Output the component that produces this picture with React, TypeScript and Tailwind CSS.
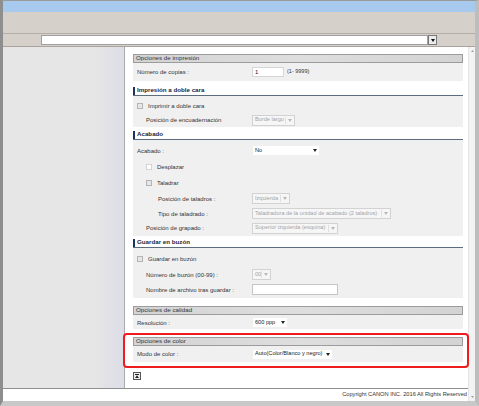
import clsx from "clsx";
import type { ReactNode } from "react";

const indents = ["pl-[4px]", "pl-[13px]", "pl-[25px]"];

function Arrow({ color }: { color: string }) {
  return (
    <svg width="4" height="3" viewBox="0 0 4 3">
      <path d="M0 0 L4 0 L2 3Z" fill={color} />
    </svg>
  );
}

function Select({
  value,
  className,
  disabled,
}: {
  value: string;
  className: string;
  disabled?: boolean;
}) {
  return (
    <div
      className={clsx(
        "flex h-[11px] items-center justify-between border pl-[2px] pr-[2px] text-[5.6px]",
        disabled
          ? "border-[#d2d2d2] bg-[#f6f6f6] text-[#a4a4a4]"
          : "border-[#f0f0f0] bg-white text-[#222]",
        className,
      )}
    >
      <span className="whitespace-nowrap leading-none">{value}</span>
      <span className="flex shrink-0 items-center gap-[2px]">
        {disabled && <span className="h-[7px] w-px bg-[#e0e0e0]" />}
        <Arrow color={disabled ? "#b8b8b8" : "#222"} />
      </span>
    </div>
  );
}

function Check({ light }: { light?: boolean }) {
  return (
    <span
      className={clsx(
        "inline-block h-[6px] w-[6px] border",
        light ? "border-[#d4d4d4] bg-white" : "border-[#b4b4b4] bg-[#e6e6e6]",
      )}
    />
  );
}

function Row({
  h,
  indent = 0,
  label,
  children,
}: {
  h: string;
  indent?: number;
  label: ReactNode;
  children?: ReactNode;
}) {
  return (
    <div className={clsx("grid grid-cols-[119px_1fr] items-center", h)}>
      <div className={clsx("flex items-center whitespace-nowrap text-[#333]", indents[indent])}>
        {label}
      </div>
      <div className="flex items-center">{children}</div>
    </div>
  );
}

function BoxHeader({ title, className }: { title: string; className?: string }) {
  return (
    <div
      className={clsx(
        "flex h-[9px] items-center border border-[#9c9c9c] bg-linear-to-r from-[#d3d3d3] via-[#dedede] to-[#d3d3d3] pl-[2px] text-[6.2px] text-[#333]",
        className,
      )}
    >
      {title}
    </div>
  );
}

function LineHeader({ title, className }: { title: string; className?: string }) {
  return (
    <div
      className={clsx(
        "flex h-[10px] items-center border-b border-[#5d6b7e] text-[6.2px] font-bold text-[#1d2636]",
        className,
      )}
    >
      <span className="mr-[2px] h-[8px] w-[2px] bg-[#1c3362]" />
      {title}
    </div>
  );
}

function CheckLabel({ text, light }: { text: string; light?: boolean }) {
  return (
    <span className="flex items-center gap-[5px] whitespace-nowrap">
      <Check light={light} />
      {text}
    </span>
  );
}

function TopIcon() {
  return (
    <svg width="8" height="8" viewBox="0 0 8 8">
      <rect x="0.5" y="0.5" width="7" height="7" fill="#eeeeee" stroke="#555" />
      <rect x="2" y="2" width="4" height="1" fill="#222" />
      <path d="M2 6 L4 3.3 L6 6Z" fill="#222" />
    </svg>
  );
}

export default function App() {
  return (
    <div className="h-[406px] w-[479px] overflow-hidden bg-[#c4c4c4] font-['Liberation_Sans',Arial,sans-serif] text-[6px] leading-none">
      <div className="flex h-full flex-col border-l-[3px] border-r-[4px] border-t border-b-[5px] border-l-[#8e8e8e] border-r-[#bdbdbd] border-t-[#9a9a9a] border-b-[#c8c8c8]">
        {/* title band */}
        <div className="h-[11px] bg-[#a7c9ee]" />
        {/* toolbar */}
        <div className="h-[22px] border-b border-[#b3afa7] bg-[#d5d1ca]" />
        {/* address row */}
        <div className="flex h-[13px] items-center border-b border-[#a9a59e] bg-[#d5d1ca] pl-[38px]">
          <div className="h-[10px] w-[387px] border border-[#a0a0a0] bg-white" />
          <div className="flex h-[10px] w-[9px] items-center justify-center border border-[#7a7a7a] bg-[#ececec]">
            <Arrow color="#111" />
          </div>
        </div>

        {/* content */}
        <div className="flex min-h-0 flex-1">
          <div className="flex flex-1 flex-col">
            <div className="flex min-h-0 flex-1">
              <div className="w-[122px] border-r border-[#ababab] bg-linear-to-r from-[#e6e6e6] from-75% to-[#dcdde7]" />
              <div className="relative flex-1 bg-white pl-[8px] pr-[5px] pt-[7px]">
                <BoxHeader title="Opciones de impresión" />
                <div className="h-[18px] bg-[#f0f0f0]">
                  <Row h="h-[18px]" label="Número de copias :">
                    <div className="flex h-[10px] w-[32px] items-center border border-[#d6d6d6] bg-white pl-[2px] text-[#222]">
                      1
                    </div>
                    <span className="ml-[3px] text-[5.5px] text-[#333]">(1- 9999)</span>
                  </Row>
                </div>

                <LineHeader title="Impresión a doble cara" className="mt-[5px]" />
                <div className="bg-[#f0f0f0] pt-[3px]">
                  <Row h="h-[14px]" label={<CheckLabel text="Imprimir a doble cara" />} />
                  <Row h="h-[14px]" indent={1} label="Posición de encuadernación">
                    <Select value="Borde largo" className="w-[43px]" disabled />
                  </Row>
                </div>

                <LineHeader title="Acabado" className="mt-[3px]" />
                <div className="bg-[#f0f0f0] pb-[1px] pt-[3px]">
                  <Row h="h-[15px]" label="Acabado :">
                    <Select value="No" className="w-[68px]" />
                  </Row>
                  <Row h="h-[17px]" indent={1} label={<CheckLabel text="Desplazar" light />} />
                  <Row h="h-[16px]" indent={1} label={<CheckLabel text="Taladrar" />} />
                  <Row h="h-[15px]" indent={2} label="Posición de taladros :">
                    <Select value="Izquierda" className="w-[38px]" disabled />
                  </Row>
                  <Row h="h-[15px]" indent={2} label="Tipo de taladrado :">
                    <Select
                      value="Taladradora de la unidad de acabado (2 taladros)"
                      className="w-[139px]"
                      disabled
                    />
                  </Row>
                  <Row h="h-[14px]" indent={1} label="Posición de grapado :">
                    <Select value="Superior izquierda (esquina)" className="w-[86px]" disabled />
                  </Row>
                </div>

                <LineHeader title="Guardar en buzón" className="mt-[2px]" />
                <div className="bg-[#f0f0f0] pb-[1px] pt-[3px]">
                  <Row h="h-[16px]" label={<CheckLabel text="Guardar en buzón" />} />
                  <Row h="h-[15px]" indent={1} label="Número de buzón (00-99) :">
                    <Select value="00" className="w-[19px]" disabled />
                  </Row>
                  <Row h="h-[15px]" indent={1} label="Nombre de archivo tras guardar :">
                    <div className="h-[11px] w-[86px] border border-[#c4c4c4] bg-white" />
                  </Row>
                </div>

                <BoxHeader title="Opciones de calidad" className="mt-[8px]" />
                <div className="bg-[#f0f0f0] pt-[1px]">
                  <Row h="h-[13px]" label="Resolución :">
                    <Select value="600 ppp" className="w-[36px]" />
                  </Row>
                </div>

                <div className="relative mt-[8px]">
                  <BoxHeader title="Opciones de color" />
                  <div className="bg-[#f0f0f0]">
                    <Row h="h-[16px]" label="Modo de color :">
                      <Select value="Auto(Color/Blanco y negro)" className="w-[81px]" />
                    </Row>
                  </div>
                  <div className="pointer-events-none absolute -bottom-[6px] -left-[10px] -right-[6px] -top-[4px] rounded-[4px] border-2 border-[#ee1c1c]" />
                </div>

                <div className="mt-[10px]">
                  <TopIcon />
                </div>
              </div>
            </div>
            <div className="flex h-[13px] items-center justify-end border-t border-[#8f8f8f] bg-white pr-[1px] text-[5.7px] text-[#333]">
              Copyright CANON INC. 2016 All Rights Reserved
            </div>
          </div>

          {/* scrollbar */}
          <div className="flex w-[7px] flex-col items-center justify-between border-l border-[#e4e4e4] bg-[#f3f3f3] py-[3px]">
            <svg width="3" height="2" viewBox="0 0 3 2">
              <path d="M0 2 L3 2 L1.5 0Z" fill="#a0a0a0" />
            </svg>
            <svg width="3" height="2" viewBox="0 0 3 2">
              <path d="M0 0 L3 0 L1.5 2Z" fill="#a0a0a0" />
            </svg>
          </div>
        </div>
      </div>
    </div>
  );
}
